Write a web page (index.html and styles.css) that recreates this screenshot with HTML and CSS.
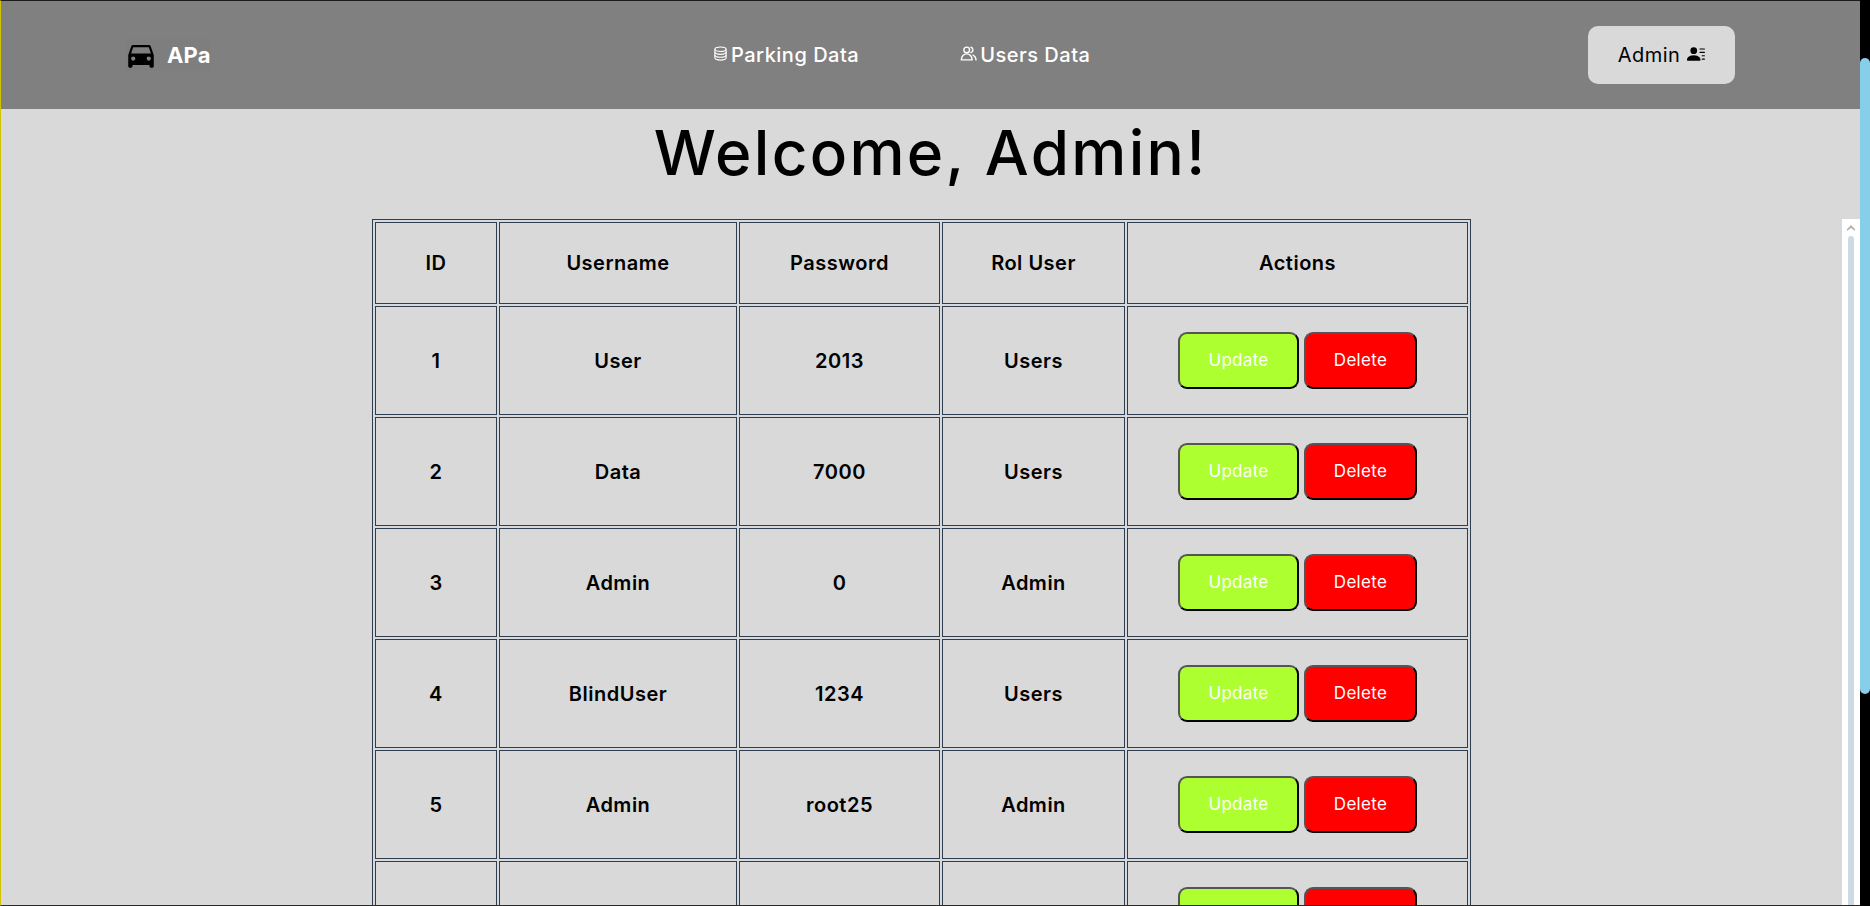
FILE: index.html
```html
<!DOCTYPE html>
<html lang="en">
<head>
    <meta charset="UTF-8">
    <title>APa - Users Data</title>
    <link rel="stylesheet" href="styles.css">
</head>
<body>
    <div class="page">
        <nav class="navbar">
            <a class="brand" href="#">
                <svg class="brand-icon" viewBox="0 0 24 24" fill="currentColor"><path d="M18.92 6.01C18.72 5.42 18.16 5 17.5 5h-11c-.66 0-1.21.42-1.42 1.01L3 12v8c0 .55.45 1 1 1h1c.55 0 1-.45 1-1v-1h12v1c0 .55.45 1 1 1h1c.55 0 1-.45 1-1v-8l-2.08-5.99zM6.5 16c-.83 0-1.5-.67-1.5-1.5S5.67 13 6.5 13s1.5.67 1.5 1.5S7.33 16 6.5 16zm11 0c-.83 0-1.5-.67-1.5-1.5s.67-1.5 1.5-1.5 1.5.67 1.5 1.5-.67 1.5-1.5 1.5zM5 11l1.5-4.5h11L19 11H5z"/></svg>
                <span>APa</span>
            </a>
            <div class="nav-links">
                <a class="nav-link" href="#">
                    <svg class="nav-icon" viewBox="0 0 16 16" fill="none" stroke="currentColor" stroke-width="1.2"><ellipse cx="8" cy="3.4" rx="6" ry="2.4"/><path d="M2 3.4v9.2c0 1.3 2.7 2.4 6 2.4s6-1.1 6-2.4V3.4"/><path d="M2 6.5c0 1.3 2.7 2.4 6 2.4s6-1.1 6-2.4"/><path d="M2 9.6c0 1.3 2.7 2.4 6 2.4s6-1.1 6-2.4"/></svg>
                    Parking Data
                </a>
                <a class="nav-link" href="#">
                    <svg class="nav-icon nav-icon-users" viewBox="0 0 24 24" fill="none" stroke="currentColor" stroke-width="2" stroke-linecap="round"><circle cx="9.5" cy="7" r="4"/><path d="M2 21v-1a7 7 0 0 1 15 0v1z"/><path d="M15.5 3.2a4 4 0 0 1 0 7.6"/><path d="M18.5 14.2A7 7 0 0 1 22.5 20v1"/></svg>
                    Users Data
                </a>
            </div>
            <button class="profile-button">
                Admin
                <svg class="profile-icon" viewBox="0 0 16 16" fill="currentColor"><path d="M6 8a3 3 0 1 0 0-6 3 3 0 0 0 0 6m-5 6s-1 0-1-1 1-4 6-4 6 3 6 4-1 1-1 1zM11 3.5a.5.5 0 0 1 .5-.5h4a.5.5 0 0 1 0 1h-4a.5.5 0 0 1-.5-.5m.5 2.5a.5.5 0 0 0 0 1h4a.5.5 0 0 0 0-1zm2 3a.5.5 0 0 0 0 1h2a.5.5 0 0 0 0-1zm0 3a.5.5 0 0 0 0 1h2a.5.5 0 0 0 0-1z"/></svg>
            </button>
        </nav>

        <h1 class="welcome">Welcome, Admin!</h1>

        <div class="table-area">
            <div class="table-clip">
                <table class="users-table">
                    <colgroup>
                        <col class="col-id">
                        <col class="col-username">
                        <col class="col-password">
                        <col class="col-rol">
                        <col class="col-actions">
                    </colgroup>
                    <thead>
                        <tr>
                            <th>ID</th>
                            <th>Username</th>
                            <th>Password</th>
                            <th>Rol User</th>
                            <th>Actions</th>
                        </tr>
                    </thead>
                    <tbody>
                        <tr>
                            <td>1</td><td>User</td><td>2013</td><td>Users</td>
                            <td><div class="actions"><button class="btn btn-update">Update</button><button class="btn btn-delete">Delete</button></div></td>
                        </tr>
                        <tr>
                            <td>2</td><td>Data</td><td>7000</td><td>Users</td>
                            <td><div class="actions"><button class="btn btn-update">Update</button><button class="btn btn-delete">Delete</button></div></td>
                        </tr>
                        <tr>
                            <td>3</td><td>Admin</td><td>0</td><td>Admin</td>
                            <td><div class="actions"><button class="btn btn-update">Update</button><button class="btn btn-delete">Delete</button></div></td>
                        </tr>
                        <tr>
                            <td>4</td><td>BlindUser</td><td>1234</td><td>Users</td>
                            <td><div class="actions"><button class="btn btn-update">Update</button><button class="btn btn-delete">Delete</button></div></td>
                        </tr>
                        <tr>
                            <td>5</td><td>Admin</td><td>root25</td><td>Admin</td>
                            <td><div class="actions"><button class="btn btn-update">Update</button><button class="btn btn-delete">Delete</button></div></td>
                        </tr>
                        <tr>
                            <td></td><td></td><td></td><td></td>
                            <td><div class="actions"><button class="btn btn-update"></button><button class="btn btn-delete"></button></div></td>
                        </tr>
                    </tbody>
                </table>
            </div>
            <div class="table-scrollbar">
                <svg class="scroll-arrow" viewBox="0 0 8 6" fill="#b5b5b5"><path d="M4 0 8 4 8 6 4 3 0 6 0 4z"/></svg>
                <div class="table-thumb"></div>
            </div>
        </div>
    </div>
    <div class="page-scrollbar">
        <div class="page-thumb"></div>
    </div>
</body>
</html>
```

FILE: styles.css
```css
* {
    box-sizing: border-box;
}

body {
    margin: 0;
    height: 906px;
    overflow: hidden;
    display: flex;
    background: #d9d9d9;
    font-family: Inter, "Liberation Sans", sans-serif;
    color: #000;
}

.page {
    flex: 1;
    min-width: 0;
    display: flex;
    flex-direction: column;
    border-left: 1px solid #d4c400;
    border-top: 1px solid #1c1c1c;
    border-bottom: 1px solid #2a2a2a;
}

/* navbar */
.navbar {
    height: 108px;
    flex: none;
    display: flex;
    align-items: center;
    padding: 0 125px;
    background: #808080;
}

.brand {
    width: 85px;
    height: 32px;
    flex: none;
    display: flex;
    align-items: center;
    gap: 9px;
    color: #fff;
    background: #7e7e7e;
    font-size: 22px;
    font-weight: 700;
    letter-spacing: .2px;
    text-decoration: none;
}

.brand-icon {
    width: 34px;
    height: 34px;
    flex: none;
    margin: 0 0 0 -2px;
    color: #000;
}

.nav-links {
    display: flex;
    gap: 101px;
    margin-left: 502px;
}

.nav-link {
    display: flex;
    align-items: center;
    gap: 3px;
    color: #fff;
    font-size: 20px;
    font-weight: 500;
    letter-spacing: .5px;
    text-decoration: none;
}

.nav-icon {
    width: 15px;
    height: 15px;
    margin-top: -4px;
}

.nav-icon-users {
    width: 17px;
    height: 17px;
}

.profile-button {
    width: 147px;
    height: 58px;
    margin-left: auto;
    display: flex;
    align-items: center;
    justify-content: center;
    gap: 7px;
    border: none;
    border-radius: 10px;
    background: #d9d9d9;
    color: #000;
    font-family: inherit;
    font-size: 20px;
    letter-spacing: .5px;
}

.profile-icon {
    width: 18px;
    height: 18px;
    margin-top: -3px;
}

/* heading */
.welcome {
    height: 110px;
    flex: none;
    margin: 0;
    padding-top: 5px;
    text-align: center;
    font-size: 62px;
    font-weight: 500;
    letter-spacing: 2.3px;
    line-height: 78px;
}

/* table */
.table-area {
    flex: 1;
    min-height: 0;
    display: flex;
}

.table-clip {
    flex: 1;
    min-width: 0;
    overflow: hidden;
}

.users-table {
    width: 1099px;
    margin: 0 auto;
    table-layout: fixed;
    border: 1px solid #2c3e50;
    border-spacing: 2px;
    font-size: 20px;
    letter-spacing: .5px;
    text-align: center;
}

.col-id { width: 122px; }
.col-username { width: 238px; }
.col-password { width: 201px; }
.col-rol { width: 183px; }
.col-actions { width: 341px; }

.users-table th,
.users-table td {
    padding: 0;
    border: 1px solid #2c3e50;
    font-weight: 600;
}

.users-table th {
    height: 82px;
}

.users-table td {
    height: 109px;
}

.actions {
    display: flex;
    justify-content: center;
    gap: 5px;
}

.btn {
    height: 57px;
    padding: 0 0 2px;
    border: 2px solid;
    border-color: #555 #000 #000 #555;
    border-radius: 9px;
    color: #fff;
    font-family: inherit;
    font-size: 17px;
    font-weight: 400;
    letter-spacing: .3px;
}

.btn-update {
    width: 121px;
    background: #adff2f;
}

.btn-delete {
    width: 113px;
    background: #f00;
}

/* scrollbars */
.table-scrollbar {
    width: 18px;
    flex: none;
    display: flex;
    flex-direction: column;
    align-items: center;
    background: #fff;
}

.scroll-arrow {
    width: 8px;
    height: 6px;
    margin-top: 6px;
}

.table-thumb {
    width: 6px;
    flex: 1;
    margin-top: 5px;
    border-radius: 3px 3px 0 0;
    background: #cddae5;
}

.page-scrollbar {
    width: 10px;
    flex: none;
    background: #000;
}

.page-thumb {
    height: 636px;
    margin-top: 58px;
    border-radius: 5px;
    background: #87ceeb;
}
```
